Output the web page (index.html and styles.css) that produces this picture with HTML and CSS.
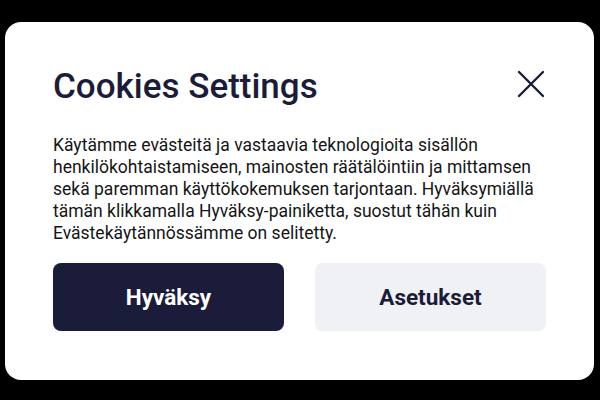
FILE: index.html
```html
<!DOCTYPE html>
<html lang="fi">
<head>
<meta charset="utf-8">
<link rel="stylesheet" href="styles.css">
</head>
<body>
<div class="dialog">
  <div class="header">
    <h1 class="title">Cookies Settings</h1>
    <button class="close" aria-label="Close">
      <svg width="28" height="28" viewBox="0 0 28 28"><path d="M2 2 L26 26 M26 2 L2 26" stroke="#1b1c3a" stroke-width="2.4" stroke-linecap="round" fill="none"/></svg>
    </button>
  </div>
  <p class="text">Käytämme evästeitä ja vastaavia teknologioita sisällön<br>henkilökohtaistamiseen, mainosten räätälöintiin ja mittamsen<br>sekä paremman käyttökokemuksen tarjontaan. Hyväksymiällä<br>tämän klikkamalla Hyväksy-painiketta, suostut tähän kuin<br>Evästekäytännössämme on selitetty.</p>
  <div class="actions">
    <button class="btn btn-primary">Hyväksy</button>
    <button class="btn btn-secondary">Asetukset</button>
  </div>
</div>
</body>
</html>
```
FILE: styles.css
```css
html, body {
  margin: 0;
  padding: 0;
  background: #000;
  width: 600px;
  height: 400px;
  overflow: hidden;
}
body {
  padding: 22px 6px 0 5px;
  box-sizing: border-box;
  font-family: Roboto, "Noto Sans", sans-serif;
}
.dialog {
  background: #fff;
  border-radius: 16px;
  height: 358px;
  box-sizing: border-box;
  padding: 43px 48px 49px 48px;
  display: flex;
  flex-direction: column;
}
.header {
  display: flex;
  justify-content: space-between;
  align-items: center;
}
.title {
  margin: 0;
  font-size: 35px;
  font-weight: 500;
  color: #1b1c3a;
  line-height: 44px;
}
.close {
  border: 0;
  background: none;
  padding: 0;
  width: 28px;
  height: 28px;
  margin-right: 1px;
  margin-top: -7px;
}
.close svg { display: block; }
.text {
  margin: 25px 0 0 0;
  font-size: 17.5px;
  line-height: 22px;
  color: #151515;
  white-space: nowrap;
}
.actions {
  margin-top: auto;
  display: grid;
  grid-template-columns: 1fr 1fr;
  gap: 31px;
}
.btn {
  height: 68px;
  border-radius: 8px;
  border: 0;
  font-family: Roboto, "Noto Sans", sans-serif;
  font-size: 22.5px;
  font-weight: 700;
}
.btn-primary {
  background: #1b1c3a;
  color: #fff;
}
.btn-secondary {
  background: #f0f1f5;
  color: #1b1c3a;
}
```
